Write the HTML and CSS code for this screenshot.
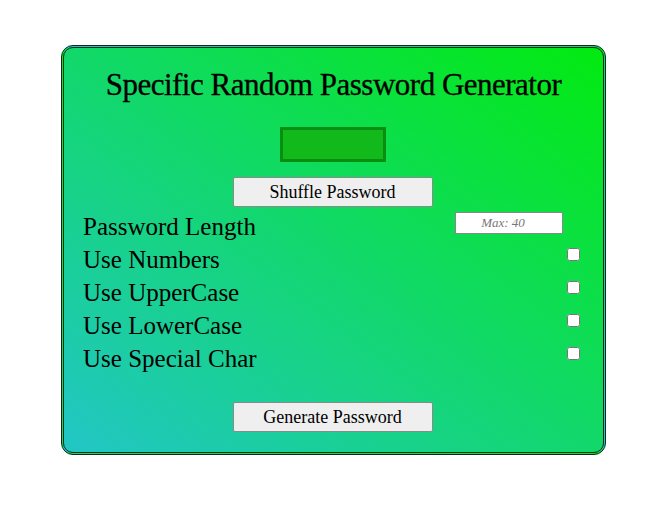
FILE: index.html
```html
<!DOCTYPE html>
<html>
<head>
<meta charset="utf-8">
<link rel="stylesheet" href="styles.css">
</head>
<body>
<div class="card">
  <h1 class="title">Specific Random Password Generator</h1>
  <div class="display"></div>
  <button class="btn">Shuffle Password</button>
  <div class="rows">
    <div class="row"><span class="label">Password Length</span><input class="len" type="text" placeholder="Max: 40"></div>
    <div class="row"><span class="label">Use Numbers</span><input class="chk" type="checkbox"></div>
    <div class="row"><span class="label">Use UpperCase</span><input class="chk" type="checkbox"></div>
    <div class="row"><span class="label">Use LowerCase</span><input class="chk" type="checkbox"></div>
    <div class="row"><span class="label">Use Special Char</span><input class="chk" type="checkbox"></div>
  </div>
  <button class="btn gen">Generate Password</button>
</div>
</body>
</html>
```
FILE: styles.css
```css
body {
  margin: 0;
  padding: 45px 0 0 61px;
  background: #fff;
  font-family: "Liberation Serif", serif;
}
.card {
  box-sizing: border-box;
  width: 545px;
  height: 410px;
  border: 3px double #0b2a1a;
  border-radius: 12px;
  background: linear-gradient(to top right, #22c6c6, #02ea10);
  display: flex;
  flex-direction: column;
  align-items: center;
  padding: 0 21px 0 19px;
}
.title {
  margin: 20px 0 0 2px;
  font-size: 31px;
  letter-spacing: -0.5px;
  -webkit-text-stroke: 0.3px #000;
  font-weight: normal;
  line-height: 34px;
  color: #000;
}
.display {
  margin-top: 25px;
  width: 106px;
  height: 35px;
  box-sizing: border-box;
  background: #12b91a;
  border: 3px solid #0a8e12;
}
.btn {
  margin-top: 15px;
  width: 200px;
  height: 30px;
  box-sizing: border-box;
  background: #efefef;
  border: 1px solid #8a8a8a;
  border-radius: 2px;
  font-family: "Liberation Serif", serif;
  font-size: 18px;
  color: #000;
  padding: 0;
}
.rows {
  align-self: stretch;
  margin-top: 3px;
  display: flex;
  flex-direction: column;
}
.row {
  height: 33px;
  display: flex;
  align-items: center;
  justify-content: space-between;
}
.label {
  font-size: 25px;
  color: #000;
}
.len {
  box-sizing: border-box;
  width: 108px;
  height: 22px;
  margin: 0 19px 7px 0;
  border: 1px solid #888;
  background: #fff;
  font-family: "Liberation Serif", serif;
  font-style: italic;
  font-size: 13px;
  text-align: center;
  padding: 0 12px 0 0;
}
.len::placeholder { color: #777; }
.chk {
  width: 13px;
  height: 13px;
  margin: 0 2px 10px 0;
}
.gen {
  margin-top: 27px;
}
```
